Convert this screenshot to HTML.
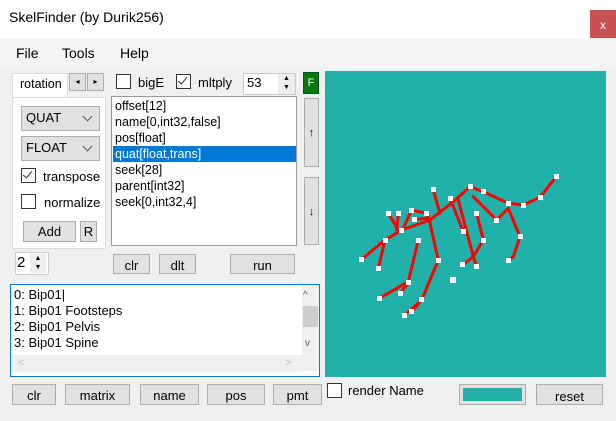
<!DOCTYPE html>
<html><head><style>
*{box-sizing:border-box;margin:0;padding:0}
body{width:616px;height:421px;background:#f0f0f0;font-family:"Liberation Sans",sans-serif;font-size:12px;color:#000;position:relative;overflow:hidden}
.a{position:absolute}
.btn{position:absolute;background:#e1e1e1;border:1px solid #adadad;text-align:center;font-size:12px}
.cb{position:absolute;width:14px;height:14px;border:1px solid #333;background:#fff}
.chk::after{content:"";position:absolute;left:3px;top:0px;width:4px;height:8px;border:solid #333;border-width:0 1.5px 1.5px 0;transform:rotate(40deg)}
.sel{position:absolute;background:#e1e1e1;border:1px solid #adadad;font-size:13px;padding:3px 0 0 4px}
.sel::after{content:"";position:absolute;right:8px;top:6px;width:6px;height:6px;border:solid #555;border-width:0 1px 1px 0;transform:rotate(45deg)}
.list div{height:16px;line-height:16px;font-size:12.5px}
</style></head><body>
<div class="a" style="left:0;top:0;width:616px;height:38px;background:#fff"></div>
<div class="a" style="left:9px;top:9px;font-size:14px">SkelFinder (by Durik256)</div>
<div class="a" style="left:590px;top:10px;width:26px;height:30px;background:#c75050;color:#fff;text-align:center;line-height:30px;font-size:12px">x</div>
<div class="a" style="left:0;top:38px;width:616px;height:30px;background:#f5f5f5"></div>
<div class="a" style="left:16px;top:45px;font-size:14px">File</div>
<div class="a" style="left:62px;top:45px;font-size:14px">Tools</div>
<div class="a" style="left:120px;top:45px;font-size:14px">Help</div>

<!-- tab panel -->
<div class="a" style="left:12px;top:73px;width:56px;height:24px;background:#fff;border:1px solid #ddd;border-bottom:none"></div>
<div class="a" style="left:20px;top:77px;font-size:12.5px">rotation</div>
<div class="btn" style="left:69px;top:73px;width:17px;height:18px;font-size:8px;line-height:16px">◂</div>
<div class="btn" style="left:87px;top:73px;width:17px;height:18px;font-size:8px;line-height:16px">▸</div>
<div class="a" style="left:12px;top:97px;width:94px;height:152px;background:#fff;border:1px solid #ddd"></div>
<div class="sel" style="left:21px;top:106px;width:79px;height:25px">QUAT</div>
<div class="sel" style="left:21px;top:136px;width:79px;height:25px">FLOAT</div>
<div class="cb chk" style="left:21px;top:168px;width:15px;height:15px"></div>
<div class="a" style="left:43px;top:169px;font-size:13px">transpose</div>
<div class="cb" style="left:21px;top:194px;width:15px;height:15px"></div>
<div class="a" style="left:44px;top:195px;font-size:13px">normalize</div>
<div class="btn" style="left:23px;top:221px;width:53px;height:21px;line-height:19px;font-size:13px">Add</div>
<div class="btn" style="left:80px;top:221px;width:17px;height:21px;line-height:19px;font-size:13px">R</div>

<!-- top row -->
<div class="cb" style="left:116px;top:74px;width:15px;height:15px"></div>
<div class="a" style="left:138px;top:75px;font-size:13px">bigE</div>
<div class="cb chk" style="left:176px;top:74px;width:15px;height:15px"></div>
<div class="a" style="left:198px;top:75px;font-size:13px">mltply</div>
<div class="a" style="left:243px;top:73px;width:53px;height:22px;background:#fff;border:1px solid #ccc"></div>
<div class="a" style="left:247px;top:75px;font-size:13px">53</div>
<div class="a" style="left:278px;top:74px;width:17px;height:20px;background:#eee;font-size:7px;line-height:9px;text-align:center">▲<br>▼</div>
<div class="a" style="left:303px;top:72px;width:16px;height:22px;background:#087808;border:1px solid #053;color:#fff;font-size:11px;text-align:center;line-height:20px">F</div>

<!-- list -->
<div class="a list" style="left:111px;top:96px;width:186px;height:150px;background:#fff;border:1px solid #999;padding:1px 0 0 3px">
<div>offset[12]</div><div>name[0,int32,false]</div><div>pos[float]</div>
<div style="background:#0078d7;color:#fff;margin-left:-2px;padding-left:2px">quat[float,trans]</div>
<div>seek[28]</div><div>parent[int32]</div><div>seek[0,int32,4]</div></div>
<div class="btn" style="left:304px;top:98px;width:15px;height:69px;line-height:69px;font-size:11px">↑</div>
<div class="btn" style="left:304px;top:177px;width:15px;height:68px;line-height:68px;font-size:11px">↓</div>

<div class="a" style="left:15px;top:252px;width:34px;height:23px;background:#fff;border:1px solid #ccc"></div>
<div class="a" style="left:17px;top:254px;font-size:15px">2</div>
<div class="a" style="left:30px;top:254px;width:16px;height:19px;background:#eee;font-size:7px;line-height:9px;text-align:center">▲<br>▼</div>
<div class="btn" style="left:113px;top:254px;width:37px;height:20px;line-height:22px;font-size:13px">clr</div>
<div class="btn" style="left:159px;top:254px;width:37px;height:20px;line-height:22px;font-size:13px">dlt</div>
<div class="btn" style="left:230px;top:254px;width:65px;height:20px;line-height:22px;font-size:13px">run</div>

<!-- bottom list -->
<div class="a list" style="left:10px;top:284px;width:310px;height:93px;background:#fff;border:1px solid #0078d7;padding:2px 0 0 3px">
<div style="font-size:13px">0: Bip01|</div><div style="font-size:13px">1: Bip01 Footsteps</div><div style="font-size:13px">2: Bip01 Pelvis</div><div style="font-size:13px">3: Bip01 Spine</div></div>
<div class="a" style="left:302px;top:285px;width:17px;height:86px;background:#f0f0f0"></div>
<div class="a" style="left:303px;top:306px;width:15px;height:21px;background:#cdcdcd"></div>
<div class="a" style="left:303px;top:290px;font-size:10px;color:#555">^</div>
<div class="a" style="left:305px;top:338px;font-size:10px;color:#555">v</div>
<div class="a" style="left:11px;top:355px;width:291px;height:17px;background:#f0f0f0"></div>
<div class="a" style="left:18px;top:357px;font-size:11px;color:#bbb">&lt;</div>
<div class="a" style="left:285px;top:357px;font-size:11px;color:#bbb">&gt;</div>

<div class="btn" style="left:12px;top:384px;width:44px;height:21px;line-height:22px;font-size:13px">clr</div>
<div class="btn" style="left:65px;top:384px;width:65px;height:21px;line-height:22px;font-size:13px">matrix</div>
<div class="btn" style="left:140px;top:384px;width:59px;height:21px;line-height:22px;font-size:13px">name</div>
<div class="btn" style="left:207px;top:384px;width:58px;height:21px;line-height:22px;font-size:13px">pos</div>
<div class="btn" style="left:273px;top:384px;width:49px;height:21px;line-height:22px;font-size:13px">pmt</div>
<div class="cb" style="left:327px;top:383px;width:15px;height:15px"></div>
<div class="a" style="left:348px;top:383px;font-size:13px">render Name</div>
<div class="btn" style="left:459px;top:384px;width:67px;height:21px;padding:3px"><div style="background:#20b2aa;width:100%;height:100%"></div></div>
<div class="btn" style="left:536px;top:384px;width:67px;height:21px;line-height:24px;font-size:13px">reset</div>

<!-- canvas -->
<svg class="a" style="left:325px;top:71px" width="281" height="306" viewBox="325 71 281 306">
<rect x="325" y="71" width="281" height="306" fill="#20b2aa"/>
<g fill="none" stroke="#f00" stroke-width="3" stroke-linejoin="round" stroke-linecap="round">
<polyline points="361.7,259.3 385,240 401.7,230 430,220 453.3,201.7 470,186.7 483.3,191.7 508.3,203.3 523.3,205 540,197.3 556.7,176"/>
<polyline points="418.3,240 408.3,281.7 379.3,298.3"/>
<polyline points="400,293.3 408.3,283.3"/>
<polyline points="430,223.3 438.3,260 421.7,300 404,315.7"/>
<polyline points="411.7,311.7 421.7,300"/>
<polyline points="385,240 378.3,268.3"/>
<polyline points="433.3,190 440,213.3"/>
<polyline points="450,198.3 463.3,231.7"/>
<polyline points="458.3,200 473.3,256.7 476.7,266.7"/>
<polyline points="476.7,213.3 483.3,240 473.3,256.7 462.7,265"/>
<polyline points="473.3,196.7 496.7,220 508.3,208.3 520,236.7 513.3,256.7 508.3,260"/>
<polyline points="388.3,213.3 398.3,230"/>
<polyline points="398.3,213.3 396.7,230"/>
<polyline points="411.7,210 401.7,231.7"/>
<polyline points="411.7,210 426.7,213.3 430,221.7"/>
<polyline points="415,219.3 426.7,218.3"/>
</g>
<g fill="#fff">
<rect x="359" y="257" width="5" height="5"/><rect x="383" y="238" width="5" height="5"/><rect x="376" y="266" width="5" height="5"/>
<rect x="377" y="296" width="5" height="5"/><rect x="398" y="291" width="5" height="5"/><rect x="406" y="280" width="5" height="5"/>
<rect x="416" y="238" width="5" height="5"/><rect x="436" y="258" width="5" height="5"/><rect x="402" y="313" width="5" height="5"/>
<rect x="409" y="309" width="5" height="5"/><rect x="419" y="297" width="5" height="5"/><rect x="431" y="187" width="5" height="5"/>
<rect x="448" y="196" width="5" height="5"/><rect x="461" y="229" width="5" height="5"/><rect x="474" y="264" width="5" height="5"/>
<rect x="460" y="262" width="5" height="5"/><rect x="481" y="238" width="5" height="5"/><rect x="474" y="211" width="5" height="5"/>
<rect x="468" y="184" width="5" height="5"/><rect x="481" y="189" width="5" height="5"/><rect x="494" y="218" width="5" height="5"/>
<rect x="506" y="201" width="5" height="5"/><rect x="518" y="234" width="5" height="5"/><rect x="506" y="258" width="5" height="5"/>
<rect x="521" y="203" width="5" height="5"/><rect x="538" y="195" width="5" height="5"/><rect x="554" y="174" width="5" height="5"/>
<rect x="386" y="211" width="5" height="5"/><rect x="396" y="211" width="5" height="5"/><rect x="409" y="208" width="5" height="5"/>
<rect x="424" y="211" width="5" height="5"/><rect x="412" y="217" width="5" height="5"/><rect x="399" y="228" width="5" height="5"/>
<rect x="450" y="277" width="6" height="6"/>
</g>
</svg>
</body></html>
